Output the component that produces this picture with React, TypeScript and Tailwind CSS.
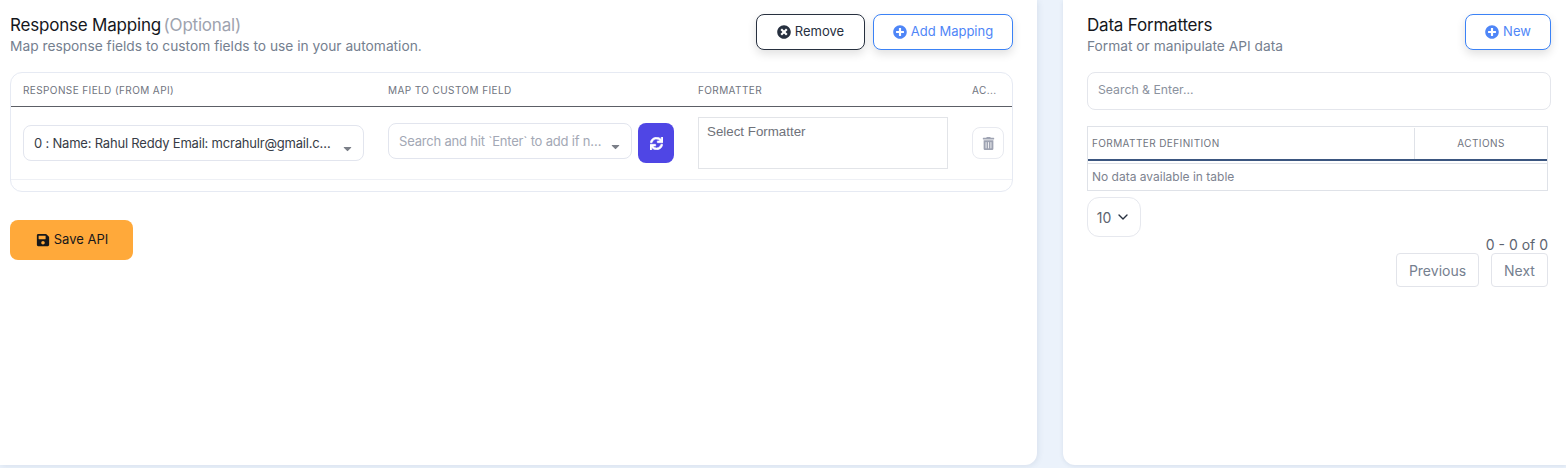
import React from 'react';
import { FaTimesCircle, FaPlusCircle, FaSave, FaSync, FaTrashAlt, FaCaretDown } from 'react-icons/fa';
import { LuChevronDown } from 'react-icons/lu';

const font = "font-['Inter','Liberation_Sans',sans-serif]";

const OutlineButton = ({ icon, label, className }: { icon: React.ReactNode; label: string; className: string }) => (
  <button className={`flex h-9 items-center justify-center gap-1 rounded-lg border bg-white text-[13px] shadow-[0_4px_10px_rgba(0,0,0,0.12)] ${className}`}>
    {icon}
    {label}
  </button>
);

const SelectBox = ({ text, className }: { text: string; className: string }) => (
  <div className={`relative flex h-9 items-center rounded-lg border border-[#e2e5ee] bg-white pr-7 pl-[10px] text-[13px] tracking-[-0.2px] ${className}`}>
    <span className="truncate pt-[2px]">{text}</span>
    <FaCaretDown className="absolute right-[9px] bottom-[5px] h-[13px] w-[13px] text-[#7b7f88]" />
  </div>
);

export default function App() {
  return (
    <div className={`flex h-[468px] w-[1566px] justify-between overflow-hidden bg-[#ebf2fb] ${font}`}>
      {/* Response mapping */}
      <div className="h-[465px] w-[1037px] rounded-br-xl bg-white pt-[14px] pr-6 pl-[10px] shadow-[1px_1px_6px_rgba(40,70,110,0.1)]">
        <div className="flex justify-between">
          <div>
            <h2 className="text-[17px] leading-[22px] tracking-[-0.2px] text-[#15171c]">
              Response Mapping <span className="ml-[-2px] text-[#9ea3af]">(Optional)</span>
            </h2>
            <p className="text-[13.75px] leading-5 text-[#75808f]">Map response fields to custom fields to use in your automation.</p>
          </div>
          <div className="flex gap-2">
            <OutlineButton
              icon={<FaTimesCircle className="h-[14px] w-[14px]" />}
              label="Remove"
              className="w-[109px] border-[#27303f] text-[#27303f]"
            />
            <OutlineButton
              icon={<FaPlusCircle className="h-[14px] w-[14px]" />}
              label="Add Mapping"
              className="w-[140px] border-[#3b82f6] text-[#4f86f7]"
            />
          </div>
        </div>

        <div className="mt-4 h-[120px] rounded-xl border border-[#e6eaf3]">
          <div className="flex h-[34px] items-center border-b border-[#5c5f66] pt-[2px] pl-3 text-[10px] tracking-[0.4px] text-[#6f7480]">
            <span className="w-[365px]">RESPONSE FIELD (FROM API)</span>
            <span className="w-[310px]">MAP TO CUSTOM FIELD</span>
            <span className="w-[274px]">FORMATTER</span>
            <span>AC...</span>
          </div>
          <div className="flex h-[73px] items-center border-b border-[#eef0f5] pl-3">
            <SelectBox text="0 : Name: Rahul Reddy Email: mcrahulr@gmail.com" className="w-[341px] text-[#373c46]" />
            <div className="ml-6 flex w-[286px] items-center gap-[6px]">
              <SelectBox text="Search and hit `Enter` to add if not found" className="-mt-1 w-[244px] text-[#a3a8b5]" />
              <button className="flex h-10 w-9 items-center justify-center rounded-lg bg-[#4f46e5] text-white">
                <FaSync className="h-[13px] w-[13px] stroke-current stroke-[24]" />
              </button>
            </div>
            <div className="ml-6 h-[52px] w-[250px] border border-[#e2e4e8] px-2 pt-[6px] font-['Liberation_Sans',sans-serif] text-[13.33px] leading-[15px] text-[#6f727a]">
              Select Formatter
            </div>
            <button className="ml-6 flex h-8 w-8 items-center justify-center rounded-lg border border-[#e8eaf0]">
              <FaTrashAlt className="h-[13px] w-[13px] text-[#9ea3b2]" />
            </button>
          </div>
        </div>

        <button className="mt-7 flex h-10 w-[123px] items-center justify-center gap-1 rounded-lg bg-[#ffa93a] pl-[1px] text-[13px] text-[#17181a]">
          <FaSave className="h-[14px] w-[14px]" />
          Save API
        </button>
      </div>

      {/* Data formatters */}
      <div className="h-[465px] w-[503px] rounded-bl-xl bg-white pt-[14px] pr-[15px] pl-6 shadow-[0_1px_4px_rgba(40,70,110,0.1)]">
        <div className="flex justify-between">
          <div>
            <h2 className="text-[17px] leading-[22px] tracking-[-0.2px] text-[#15171c]">Data Formatters</h2>
            <p className="text-[13.75px] leading-5 text-[#75808f]">Format or manipulate API data</p>
          </div>
          <OutlineButton
            icon={<FaPlusCircle className="h-[14px] w-[14px]" />}
            label="New"
            className="w-[86px] border-[#3b82f6] text-[#4f86f7]"
          />
        </div>

        <div className="mt-4 flex h-[38px] items-center rounded-lg border border-[#e4e6ec] px-[10px] pb-[2px] text-[12.25px] text-[#8b929e]">
          Search &amp; Enter...
        </div>

        <div className="mt-4 mr-[3px] border border-[#dfe2e8]">
          <div className="flex h-[34px] border-b-2 border-[#3b5680] pt-[1px] text-[10px] tracking-[0.4px] text-[#6f7480]">
            <div className="flex flex-1 items-center border-r border-[#dfe2e8] pl-1">FORMATTER DEFINITION</div>
            <div className="flex w-[132px] items-center justify-center">ACTIONS</div>
          </div>
          <div className="mt-[2px] flex h-[27px] items-center border-t border-[#dfe2e8] pl-1 text-[12px] text-[#7d8390]">
            No data available in table
          </div>
        </div>

        <div className="mt-[6px] flex h-10 w-[54px] items-center justify-center gap-1 rounded-xl border border-[#e6e8ee] text-[14px] text-[#5d6470]">
          10
          <LuChevronDown className="h-4 w-4 text-[#27303f]" />
        </div>

        <div className="mr-[3px] flex flex-col items-end">
          <span className="text-[14px] leading-[16px] text-[#5d6470]">0 - 0 of 0</span>
          <div className="flex gap-3">
            <button className="h-[34px] w-[83px] rounded-sm border border-[#e2e4ea] text-[14px] text-[#75808f]">Previous</button>
            <button className="h-[34px] w-[57px] rounded-sm border border-[#e2e4ea] text-[14px] text-[#75808f]">Next</button>
          </div>
        </div>
      </div>
    </div>
  );
}
